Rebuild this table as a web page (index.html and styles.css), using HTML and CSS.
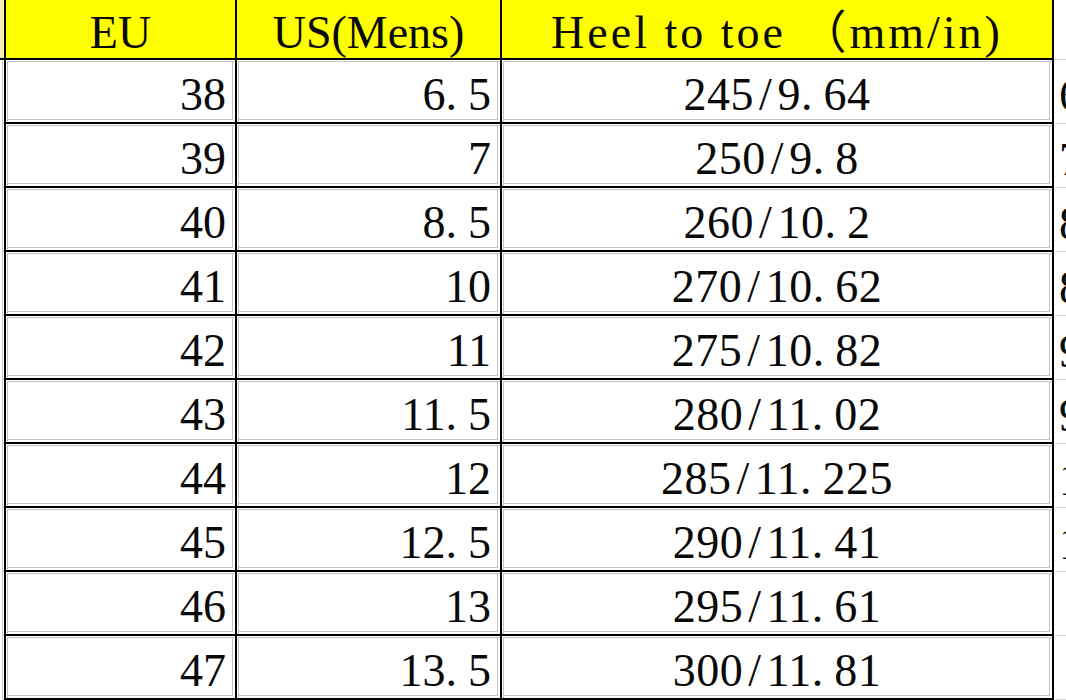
FILE: index.html
```html
<!DOCTYPE html>
<html lang="en">
<head>
<meta charset="utf-8">
<title>Size chart</title>
<link rel="stylesheet" href="styles.css">
</head>
<body>
<div class="sheet">
  <div class="cell edge edge-head"></div>
  <div class="cell head">EU</div>
  <div class="cell head">US(Mens)</div>
  <div class="cell head head-wide">Heel to toe （mm/in)</div>
  <div class="cell side side-head"></div>

  <div class="cell edge"></div>
  <div class="cell num">38</div>
  <div class="cell num">6<span class="dot">.</span>5</div>
  <div class="cell mid">245<span class="sl">/</span>9<span class="dot">.</span>64</div>
  <div class="cell side">6</div>

  <div class="cell edge"></div>
  <div class="cell num">39</div>
  <div class="cell num">7</div>
  <div class="cell mid">250<span class="sl">/</span>9<span class="dot">.</span>8</div>
  <div class="cell side">7</div>

  <div class="cell edge"></div>
  <div class="cell num">40</div>
  <div class="cell num">8<span class="dot">.</span>5</div>
  <div class="cell mid">260<span class="sl">/</span>10<span class="dot">.</span>2</div>
  <div class="cell side">8</div>

  <div class="cell edge"></div>
  <div class="cell num">41</div>
  <div class="cell num">10</div>
  <div class="cell mid">270<span class="sl">/</span>10<span class="dot">.</span>62</div>
  <div class="cell side">8</div>

  <div class="cell edge"></div>
  <div class="cell num">42</div>
  <div class="cell num">11</div>
  <div class="cell mid">275<span class="sl">/</span>10<span class="dot">.</span>82</div>
  <div class="cell side">9</div>

  <div class="cell edge"></div>
  <div class="cell num">43</div>
  <div class="cell num">11<span class="dot">.</span>5</div>
  <div class="cell mid">280<span class="sl">/</span>11<span class="dot">.</span>02</div>
  <div class="cell side">9</div>

  <div class="cell edge"></div>
  <div class="cell num">44</div>
  <div class="cell num">12</div>
  <div class="cell mid">285<span class="sl">/</span>11<span class="dot">.</span>225</div>
  <div class="cell side">10</div>

  <div class="cell edge"></div>
  <div class="cell num">45</div>
  <div class="cell num">12<span class="dot">.</span>5</div>
  <div class="cell mid">290<span class="sl">/</span>11<span class="dot">.</span>41</div>
  <div class="cell side">10</div>

  <div class="cell edge"></div>
  <div class="cell num">46</div>
  <div class="cell num">13</div>
  <div class="cell mid">295<span class="sl">/</span>11<span class="dot">.</span>61</div>
  <div class="cell side"></div>

  <div class="cell edge"></div>
  <div class="cell num">47</div>
  <div class="cell num">13<span class="dot">.</span>5</div>
  <div class="cell mid">300<span class="sl">/</span>11<span class="dot">.</span>81</div>
  <div class="cell side"></div>
</div>
</body>
</html>
```

FILE: styles.css
```css
html, body {
  margin: 0;
  padding: 0;
  background: #ffffff;
  overflow: hidden;
}

.sheet {
  display: grid;
  grid-template-columns: 6px 231px 265px 552px 1fr;
  grid-template-rows: 60px repeat(10, 64px);
  width: 1066px;
  height: 700px;
  font-family: "Liberation Serif", "Noto Sans CJK SC", serif;
  font-size: 46px;
  line-height: 51px;
  color: #0a0a0a;
}

.cell {
  box-sizing: border-box;
  display: flex;
  align-items: center;
  padding-top: 7px;
  white-space: nowrap;
  overflow: hidden;
  border-right: 2px solid #000;
  border-bottom: 2px solid #000;
  background: #fff;
  box-shadow: inset 1px 1px 0 #fff, inset 2px 2px 0 #c4c4c4,
              inset -2px -2px 0 #fff, inset -3px -3px 0 #c4c4c4;
}

.edge {
  box-shadow: inset 2px 0 0 #fff, inset 3px 0 0 #cfcfcf,
              inset 0 -1px 0 #cfcfcf;
  border-bottom: none;
}

.edge-head {
  background: #f4efb4;
  box-shadow: none;
  border-bottom: 2px solid #000;
}

.head {
  background: #ffff00;
  box-shadow: none;
  justify-content: center;
}

.head-wide {
  letter-spacing: 3px;
}

.num {
  justify-content: flex-end;
  padding-right: 9px;
}

.mid {
  justify-content: center;
  letter-spacing: 0.5px;
}

.side {
  border-right: none;
  border-bottom: none;
  padding-left: 5px;
  box-shadow: inset 2px 0 0 #fff, inset 0 -1px 0 #d2d2d2;
  justify-content: flex-start;
}

.side-head {
  box-shadow: inset 0 -1px 0 #d2d2d2;
}

.dot {
  letter-spacing: 11px;
}

.sl {
  margin: 0 5px;
}
```
